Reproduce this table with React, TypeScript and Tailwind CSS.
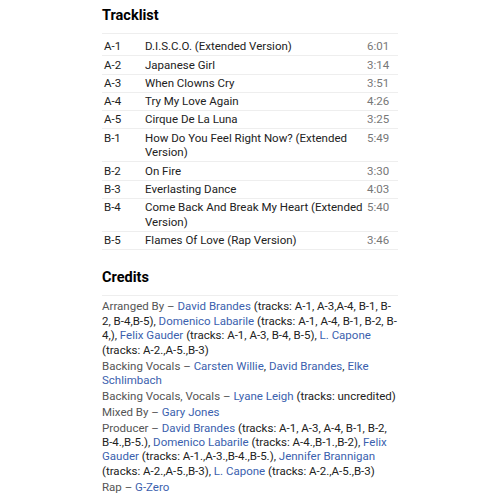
const tracks = [
  { pos: "A-1", title: "D.I.S.C.O. (Extended Version)", dur: "6:01" },
  { pos: "A-2", title: "Japanese Girl", dur: "3:14" },
  { pos: "A-3", title: "When Clowns Cry", dur: "3:51" },
  { pos: "A-4", title: "Try My Love Again", dur: "4:26" },
  { pos: "A-5", title: "Cirque De La Luna", dur: "3:25" },
  { pos: "B-1", title: "How Do You Feel Right Now? (Extended Version)", dur: "5:49" },
  { pos: "B-2", title: "On Fire", dur: "3:30" },
  { pos: "B-3", title: "Everlasting Dance", dur: "4:03" },
  { pos: "B-4", title: "Come Back And Break My Heart (Extended Version)", dur: "5:40" },
  { pos: "B-5", title: "Flames Of Love (Rap Version)", dur: "3:46" },
];

type Part = { name: string; note?: string };

const credits: { role: string; parts: Part[] }[] = [
  {
    role: "Arranged By",
    parts: [
      { name: "David Brandes", note: "(tracks: A-1, A-3,A-4, B-1, B-2, B-4,B-5)" },
      { name: "Domenico Labarile", note: "(tracks: A-1, A-4, B-1, B-2, B-4,)" },
      { name: "Felix Gauder", note: "(tracks: A-1, A-3, B-4, B-5)" },
      { name: "L. Capone", note: "(tracks: A-2.,A-5.,B-3)" },
    ],
  },
  {
    role: "Backing Vocals",
    parts: [{ name: "Carsten Willie" }, { name: "David Brandes" }, { name: "Elke Schlimbach" }],
  },
  {
    role: "Backing Vocals, Vocals",
    parts: [{ name: "Lyane Leigh", note: "(tracks: uncredited)" }],
  },
  { role: "Mixed By", parts: [{ name: "Gary Jones" }] },
  {
    role: "Producer",
    parts: [
      { name: "David Brandes", note: "(tracks: A-1, A-3, A-4, B-1, B-2, B-4.,B-5.)" },
      { name: "Domenico Labarile", note: "(tracks: A-4.,B-1.,B-2)" },
      { name: "Felix Gauder", note: "(tracks: A-1.,A-3.,B-4.,B-5.)" },
      { name: "Jennifer Brannigan", note: "(tracks: A-2.,A-5.,B-3)" },
      { name: "L. Capone", note: "(tracks: A-2.,A-5.,B-3)" },
    ],
  },
  { role: "Rap", parts: [{ name: "G-Zero" }] },
];

export default function App() {
  return (
    <div className="min-h-[500px] bg-white font-['Roboto',sans-serif] text-[11.5px] text-[#222]">
      <div className="mx-auto w-[296px] pt-[6px]">
        {/* Tracklist */}
        <h2 className="text-[14.5px] font-bold leading-[20px] text-black">Tracklist</h2>
        <div className="mt-[7px] border-t border-[#eee] pt-[4px]">
          {tracks.map((t) => (
            <div
              key={t.pos}
              className="grid grid-cols-[43px_1fr_33px] border-b border-[#eee] py-[1.3px] leading-[14.7px]"
            >
              <span className="pl-[2px]">{t.pos}</span>
              <span className="pr-[2px]">{t.title}</span>
              <span className="pl-[2px] text-[#777]">{t.dur}</span>
            </div>
          ))}
        </div>

        {/* Credits */}
        <h2 className="mt-[18px] text-[14.5px] font-bold leading-[20px] text-black">Credits</h2>
        <div className="mt-[7px] border-t border-[#eee] pt-[3px] leading-[14.4px]">
          {credits.map((c) => (
            <p key={c.role} className="mb-[1.5px]">
              <span className="text-[#555]">{c.role} – </span>
              {c.parts.map((p, i) => (
                <span key={p.name + i}>
                  <a className="text-[#3b5fae]">{p.name}</a>
                  {p.note && <> {p.note}</>}
                  {i < c.parts.length - 1 && ", "}
                </span>
              ))}
            </p>
          ))}
        </div>
      </div>
    </div>
  );
}
